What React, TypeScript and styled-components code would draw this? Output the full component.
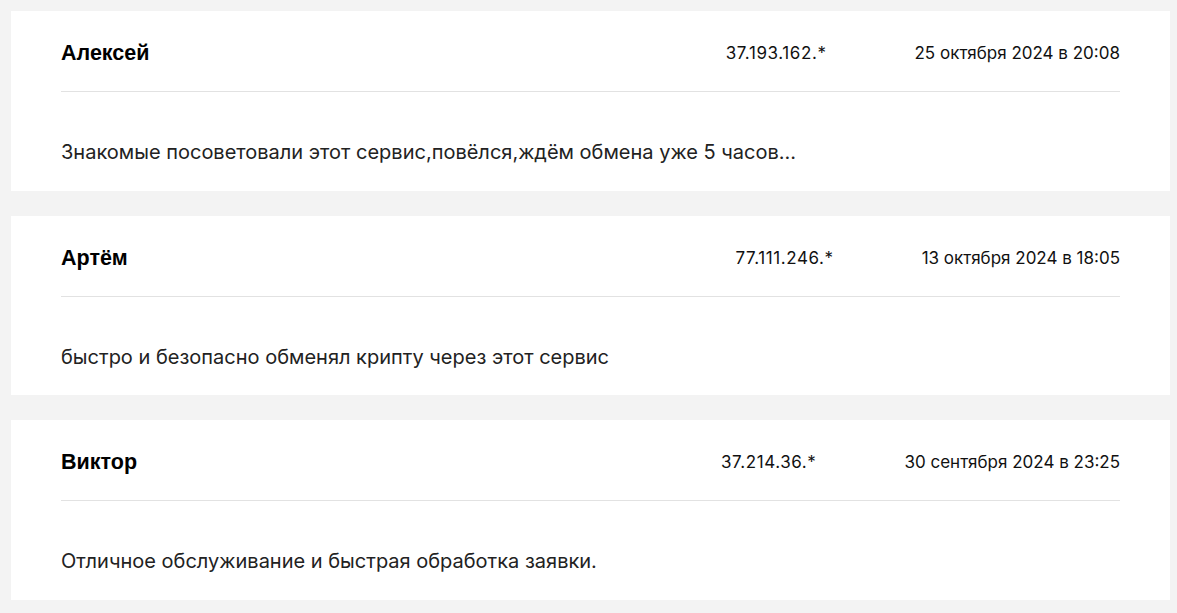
import styled, { createGlobalStyle } from "styled-components";

const GlobalStyle = createGlobalStyle`
  html, body {
    margin: 0;
    padding: 0;
    background: #f3f3f3;
  }
  * {
    box-sizing: border-box;
  }
`;

const Page = styled.div`
  display: flex;
  flex-direction: column;
  gap: 25px;
  padding: 11px 7px 11px 11px;
  background: #f3f3f3;
`;

const Card = styled.div`
  background: #ffffff;
  padding: 0 50px;
`;

const Header = styled.div`
  display: flex;
  align-items: center;
  padding: 30px 0 26px;
  border-bottom: 1px solid #e2e2e2;
`;

const Name = styled.div`
  flex: 1;
  font-family: "Liberation Sans", Arial, sans-serif;
  font-weight: 700;
  font-size: 21.5px;
  line-height: 24px;
  color: #000;
`;

const Meta = styled.div`
  display: flex;
  align-items: center;
  gap: 88px;
  font-family: Inter, "Noto Sans", sans-serif;
  font-size: 17px;
  line-height: 24px;
  color: #111;
`;

const Ip = styled.span`
  letter-spacing: 0.035em;
`;

const Text = styled.p`
  margin: 0;
  padding: 46px 0 24.5px;
  font-family: Inter, "Noto Sans", sans-serif;
  font-size: 20px;
  line-height: 28px;
  color: #222;
`;

type Review = {
  name: string;
  ip: string;
  date: string;
  text: string;
};

const reviews: Review[] = [
  {
    name: "Алексей",
    ip: "37.193.162.*",
    date: "25 октября 2024 в 20:08",
    text: "Знакомые посоветовали этот сервис,повёлся,ждём обмена уже 5 часов...",
  },
  {
    name: "Артём",
    ip: "77.111.246.*",
    date: "13 октября 2024 в 18:05",
    text: "быстро и безопасно обменял крипту через этот сервис",
  },
  {
    name: "Виктор",
    ip: "37.214.36.*",
    date: "30 сентября 2024 в 23:25",
    text: "Отличное обслуживание и быстрая обработка заявки.",
  },
];

export default function App() {
  return (
    <>
      <GlobalStyle />
      <Page>
        {reviews.map((r) => (
          <Card key={r.name}>
            <Header>
              <Name>{r.name}</Name>
              <Meta>
                <Ip>{r.ip}</Ip>
                <span>{r.date}</span>
              </Meta>
            </Header>
            <Text>{r.text}</Text>
          </Card>
        ))}
      </Page>
    </>
  );
}
